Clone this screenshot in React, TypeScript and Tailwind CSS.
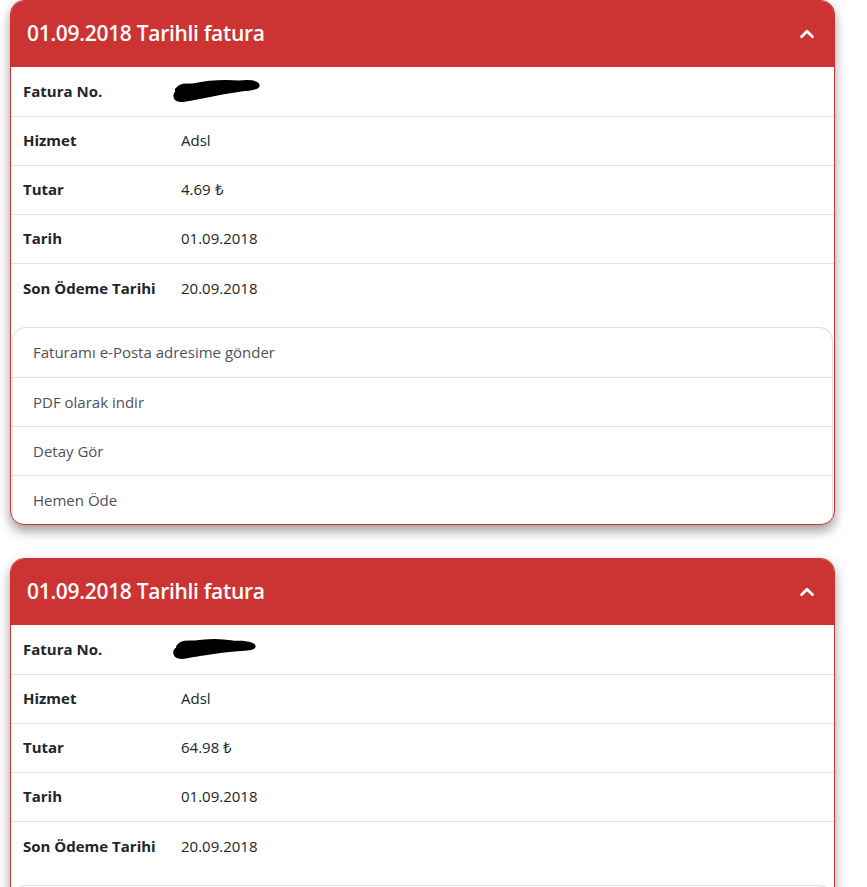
import { ChevronUp } from 'lucide-react';

interface Invoice {
  date: string;
  service: string;
  amount: string;
  dueDate: string;
}

const invoices: Invoice[] = [
  { date: '01.09.2018', service: 'Adsl', amount: '4.69', dueDate: '20.09.2018' },
  { date: '01.09.2018', service: 'Adsl', amount: '64.98', dueDate: '20.09.2018' },
];

const actions = ['Faturamı e-Posta adresime gönder', 'PDF olarak indir', 'Detay Gör', 'Hemen Öde'];

function Scribble({ wide }: { wide: boolean }) {
  // hand-drawn marker blot hiding the invoice number
  return (
    <svg width="88" height="24" viewBox="0 0 88 24" className="block -ml-2">
      <path
        d={
          wide
            ? 'M5 9 C8 5 14 6 20 6 C34 3 52 2 66 3 C76 2 84 3 85 6 C86 9 78 10 68 11 C54 13 40 16 24 19 C14 21 6 23 3 20 C1 17 2 14 4 13 C3 11 3 10 5 9 Z'
            : 'M6 8 C9 4 16 5 22 5 C34 3 48 3 60 5 C70 5 80 6 81 9 C82 12 72 12 62 13 C48 14 32 17 18 19 C10 21 3 21 2 17 C1 14 3 12 5 11 C4 10 5 9 6 8 Z'
        }
        fill="#000"
        stroke="#000"
        strokeWidth="3"
        strokeLinejoin="round"
      />
    </svg>
  );
}

function InvoiceCard({ invoice, first }: { invoice: Invoice; first: boolean }) {
  const rows: [string, React.ReactNode][] = [
    ['Fatura No.', <Scribble wide={first} />],
    ['Hizmet', invoice.service],
    ['Tutar', `${invoice.amount} ₺`],
    ['Tarih', invoice.date],
    ['Son Ödeme Tarihi', invoice.dueDate],
  ];

  return (
    <div className="w-[825px] ml-[10px] bg-white border border-[#cc3333] rounded-[14px] shadow-[0_6px_12px_rgba(0,0,0,0.38)] overflow-hidden">
      <div className="h-[66px] bg-[#cc3333] flex items-center justify-between pl-4 pr-4">
        <h2 className="text-white text-[21px] font-semibold tracking-[-0.3px]">
          {invoice.date} Tarihli fatura
        </h2>
        <ChevronUp className="text-white" size={22} strokeWidth={3} />
      </div>

      <table className="w-full text-[15px] text-[#212529] mb-[15px]">
        <tbody>
          {rows.map(([label, value], i) => (
            <tr key={i} className={i > 0 ? 'border-t border-[#dee2e6]' : ''}>
              <td className="w-[158px] h-[49px] px-3 font-bold">{label}</td>
              <td className="px-3">{value}</td>
            </tr>
          ))}
        </tbody>
      </table>

      <ul className="mx-px border-x border-t border-[#dfdfdf] rounded-t-[14px] overflow-hidden">
        {actions.map((a, i) => (
          <li
            key={a}
            className={`h-[49px] flex items-center px-5 text-[15px] text-[#4d5257] ${i > 0 ? 'border-t border-[#dfdfdf]' : ''}`}
          >
            {a}
          </li>
        ))}
      </ul>
    </div>
  );
}

export default function App() {
  return (
    <div className="min-h-screen bg-white font-['Open_Sans',sans-serif] w-[847px] flex flex-col gap-[33px]">
      {invoices.map((inv, i) => (
        <InvoiceCard key={i} invoice={inv} first={i === 0} />
      ))}
    </div>
  );
}
